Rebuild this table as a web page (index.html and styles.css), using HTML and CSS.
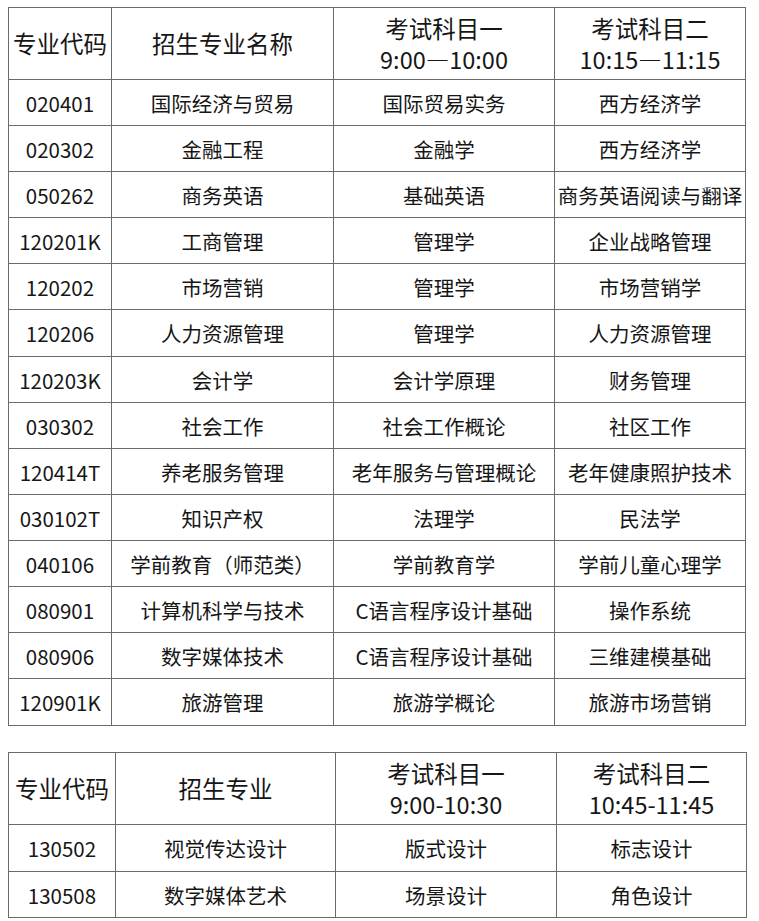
FILE: index.html
```html
<!DOCTYPE html>
<html lang="zh-CN">
<head>
<meta charset="utf-8">
<title>考试科目</title>
<link rel="stylesheet" href="styles.css">
</head>
<body>
<table class="grid grid-main">
  <colgroup><col class="c1"><col class="c2"><col class="c3"><col class="c4"></colgroup>
  <tr class="head">
    <th>专业代码</th>
    <th>招生专业名称</th>
    <th>考试科目一<br>9:00—10:00</th>
    <th>考试科目二<br>10:15—11:15</th>
  </tr>
  <tr><td>020401</td><td>国际经济与贸易</td><td>国际贸易实务</td><td>西方经济学</td></tr>
  <tr><td>020302</td><td>金融工程</td><td>金融学</td><td>西方经济学</td></tr>
  <tr><td>050262</td><td>商务英语</td><td>基础英语</td><td>商务英语阅读与翻译</td></tr>
  <tr><td>120201K</td><td>工商管理</td><td>管理学</td><td>企业战略管理</td></tr>
  <tr><td>120202</td><td>市场营销</td><td>管理学</td><td>市场营销学</td></tr>
  <tr class="tall"><td>120206</td><td>人力资源管理</td><td>管理学</td><td>人力资源管理</td></tr>
  <tr><td>120203K</td><td>会计学</td><td>会计学原理</td><td>财务管理</td></tr>
  <tr><td>030302</td><td>社会工作</td><td>社会工作概论</td><td>社区工作</td></tr>
  <tr><td>120414T</td><td>养老服务管理</td><td>老年服务与管理概论</td><td>老年健康照护技术</td></tr>
  <tr><td>030102T</td><td>知识产权</td><td>法理学</td><td>民法学</td></tr>
  <tr><td>040106</td><td>学前教育（师范类）</td><td>学前教育学</td><td>学前儿童心理学</td></tr>
  <tr><td>080901</td><td>计算机科学与技术</td><td>C语言程序设计基础</td><td>操作系统</td></tr>
  <tr><td>080906</td><td>数字媒体技术</td><td>C语言程序设计基础</td><td>三维建模基础</td></tr>
  <tr class="tall"><td>120901K</td><td>旅游管理</td><td>旅游学概论</td><td>旅游市场营销</td></tr>
</table>

<table class="grid grid-art">
  <colgroup><col class="d1"><col class="d2"><col class="d3"><col class="d4"></colgroup>
  <tr class="head">
    <th>专业代码</th>
    <th>招生专业</th>
    <th>考试科目一<br>9:00-10:30</th>
    <th>考试科目二<br>10:45-11:45</th>
  </tr>
  <tr class="tall"><td>130502</td><td>视觉传达设计</td><td>版式设计</td><td>标志设计</td></tr>
  <tr><td>130508</td><td>数字媒体艺术</td><td>场景设计</td><td>角色设计</td></tr>
</table>
</body>
</html>
```

FILE: styles.css
```css
html, body {
  margin: 0;
  padding: 0;
  background: #ffffff;
}

body {
  padding: 7px 0 0 8px;
  font-family: "Noto Sans CJK SC", "Noto Sans", sans-serif;
  color: #161616;
}

.grid {
  border-collapse: collapse;
  table-layout: fixed;
}

.grid th,
.grid td {
  border: 1px solid #6a6a6a;
  padding: 0;
  text-align: center;
  vertical-align: middle;
  white-space: nowrap;
  overflow: visible;
}

.grid th {
  font-weight: normal;
  font-size: 23.5px;
  line-height: 31px;
}

.grid td {
  font-size: 20.5px;
  line-height: 26px;
}

.grid tr { height: 46px; }
.grid tr.head { height: 72px; }
.grid tr.tall { height: 47px; }

.grid-main { width: 737px; }
.grid-main .c1 { width: 103px; }
.grid-main .c2 { width: 222px; }
.grid-main .c3 { width: 221px; }
.grid-main .c4 { width: 191px; }

.grid-art {
  width: 738px;
  margin-top: 26px;
}
.grid-art .d1 { width: 107px; }
.grid-art .d2 { width: 220px; }
.grid-art .d3 { width: 221px; }
.grid-art .d4 { width: 190px; }
```
